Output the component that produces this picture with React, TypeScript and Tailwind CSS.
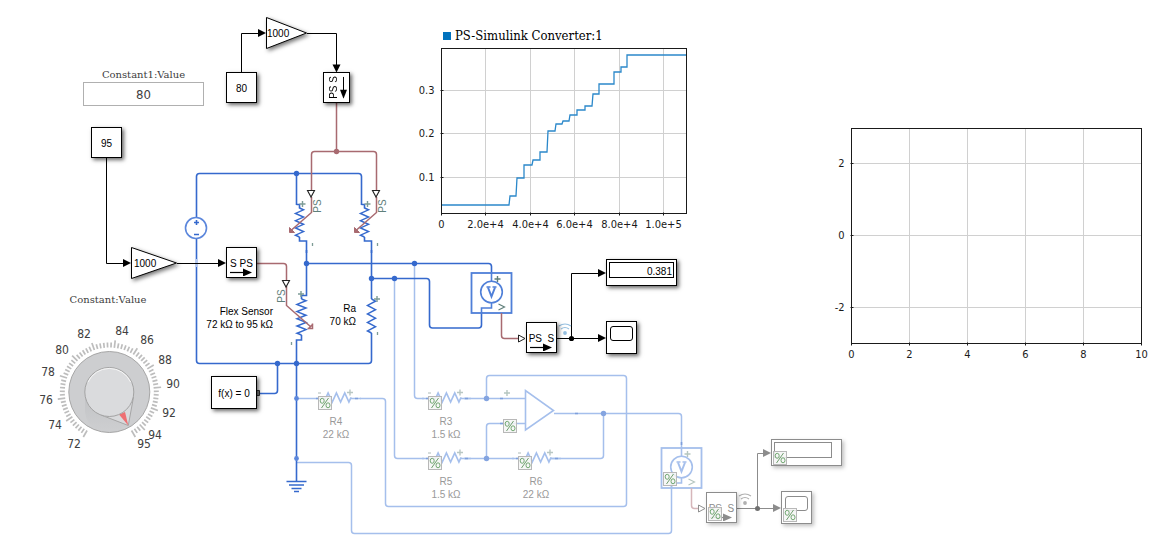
import { useState } from "react";
import type { ReactNode } from "react";

const BLUE = "#3569cd";
const PALE = "#a5bfec";
const RED = "#a86a70";

/* ---------- geometry helpers ---------- */

function zigzagV(x: number, y0: number, y1: number, teeth: number, amp: number) {
  const step = (y1 - y0) / (teeth * 2);
  let d = `M${x} ${y0}`;
  for (let i = 0; i < teeth * 2; i++) {
    const side = i % 2 === 0 ? amp : -amp;
    d += ` L${x + side} ${y0 + step * (i + 0.5)}`;
  }
  return d + ` L${x} ${y1}`;
}

function zigzagH(x0: number, x1: number, y: number, teeth: number, amp: number) {
  const step = (x1 - x0) / (teeth * 2);
  let d = `M${x0} ${y}`;
  for (let i = 0; i < teeth * 2; i++) {
    const side = i % 2 === 0 ? -amp : amp;
    d += ` L${x0 + step * (i + 0.5)} ${y + side}`;
  }
  return d + ` L${x1} ${y}`;
}

/* ---------- schematic symbols ---------- */

function Dot({ x, y, color = BLUE, r = 2.7 }: { x: number; y: number; color?: string; r?: number }) {
  return <circle cx={x} cy={y} r={r} fill={color} />;
}

function ArrowRight({ x, y, color = "#000" }: { x: number; y: number; color?: string }) {
  return <path d={`M${x} ${y} l-8 -4 v8 z`} fill={color} />;
}

function Plus({ x, y, color = "#7d9c96" }: { x: number; y: number; color?: string }) {
  return <path d={`M${x - 3} ${y} h6 M${x} ${y - 3} v6`} stroke={color} strokeWidth="1.4" fill="none" />;
}

function Voltmeter({ x, y, color, mark }: { x: number; y: number; color: string; mark: string }) {
  return (
    <g fill="none" stroke={color}>
      <rect x={x - 20} y={y - 19} width="40" height="40" strokeWidth="1.8" />
      <circle cx={x} cy={y} r="10.8" strokeWidth="1.6" fill="#fff" />
      <path d={`M${x} ${y - 20} V${y - 11} M${x} ${y + 11} v5 h-10 v5`} strokeWidth="1.6" />
      <path d={`M${x - 3.5} ${y - 4.5} l3.5 9 l3.5 -9`} strokeWidth="2" />
      <path d={`M${x - 5} ${y - 5} h4 M${x + 1} ${y - 5} h4`} strokeWidth="1.3" />
      <path d={`M${x + 3} ${y - 13} h6 M${x + 6} ${y - 16} v6`} stroke={mark} strokeWidth="1.4" />
      <path d={`M${x + 7} ${y + 12} l6 3 l-6 3`} stroke={mark} strokeWidth="1.2" />
    </g>
  );
}

function Wifi({ x, y, color }: { x: number; y: number; color: string }) {
  return (
    <g fill="none" stroke={color} strokeWidth="1.1">
      <circle cx={x} cy={y + 3} r="1.9" fill={color} stroke="none" />
      <path d={`M${x - 4} ${y - 1} q4 -3 8 0 M${x - 6} ${y - 4} q6 -4 12 0`} />
    </g>
  );
}

function FadedResistor({ x, y }: { x: number; y: number }) {
  return (
    <g fill="none">
      <path d={`M${x - 26} ${y} h14 M${x + 13} ${y - 1} v1 h10`} stroke={PALE} strokeWidth="1.4" />
      <path d={zigzagH(x - 12, x + 13, y - 1, 3, 4.5)} stroke={PALE} strokeWidth="1.7" />
      <path d={`M${x - 22} ${y} h2 M${x + 17} ${y} h3`} stroke="#7e9fdc" strokeWidth="1.6" />
      <path d={`M${x - 20} ${y - 5.5} h3`} stroke="#aebcb8" strokeWidth="1" />
      <Plus x={x + 12} y={y - 6} color="#b9c7c3" />
    </g>
  );
}

function PsLabel({ x, y }: { x: number; y: number }) {
  return (
    <text
      transform={`translate(${x} ${y}) rotate(-90)`}
      textAnchor="middle"
      fill="#5f807b"
      className="font-['Liberation_Sans',Arial,sans-serif] text-[10px]"
    >
      PS
    </text>
  );
}

function VariableResistor({ x }: { x: number }) {
  return (
    <g fill="none">
      <path d={`M${x} 204.5 h3 v4`} stroke={BLUE} strokeWidth="1.6" />
      <path d={zigzagV(x + 3, 208, 237, 4, 4)} stroke={BLUE} strokeWidth="1.5" />
      <path d={`M${x + 3} 237 v4 h7 v12`} stroke={BLUE} strokeWidth="1.6" />
      <Plus x={x + 6} y={204} />
      <path d={`M${x + 16} 243 v3`} stroke="#7d9c96" strokeWidth="1.3" />
      <path d={`M${x + 15} 197 V212.5 L${x - 5} 230`} stroke={RED} strokeWidth="1.5" />
      <path d={`M${x - 7} 232.500 v-5 l5 5 z`} fill={RED} stroke={RED} />
      <path d={`M${x + 11} 190.500 h7 l-3.500 6.500 z`} fill="#fff" stroke="#222" strokeWidth="1.1" />
      <PsLabel x={x + 24} y={206} />
    </g>
  );
}

function Wiring() {
  return (
    <svg
      aria-hidden="true"
      className="pointer-events-none absolute left-0 top-0 overflow-visible"
      width="860"
      height="552"
      viewBox="0 0 860 552"
      fill="none"
    >
      {/* inactive variant wiring */}
      <g stroke={PALE} strokeWidth="1.5">
        <path d="M296.500 398.500 H312 M360 398.500 H382.500 q3 0 3 3 V503.500 q0 3 3 3 H623.500 q3 0 3 -3 V378.500 q0 -3 -3 -3 H489.500 q-3 0 -3 3 V398.500" />
        <path d="M296.500 462.500 H348.500 q3 0 3 3 V530.500 q0 3 3 3 H668.500 q3 0 3 -3 V486" />
        <path d="M414.500 263.500 V395.500 q0 3 3 3 H424 M464 398.500 H526" />
        <path d="M394.500 278.500 V455.500 q0 3 3 3 H424 M464 458.500 H514 M550 458.500 H600.500 q3 0 3 -3 V413.500" />
        <path d="M486.500 458.500 V426.500 q0 -3 3 -3 H526" />
        <path d="M554 413.500 H678.500 q3 0 3 3 V448" />
        <path d="M525.500 390.500 V430 L553.500 410.500 Z" fill="#fff" strokeWidth="1.6" />
      </g>
      <path d="M500 398.500 h3 M500 423.500 h3 M575 413.500 h3 M681.500 442 v3" stroke="#7e9fdc" strokeWidth="1.6" />
      <Plus x={507} y={393} color="#b5c6c0" />
      <FadedResistor x={338} y={398.5} />
      <FadedResistor x={448} y={398.5} />
      <FadedResistor x={448} y={458.5} />
      <FadedResistor x={538} y={458.5} />
      <Dot x={486.5} y={398.5} color="#84a4e0" />
      <Dot x={486.5} y={458.5} color="#84a4e0" />
      <Dot x={603.5} y={413.5} color="#84a4e0" />
      <Voltmeter x={681.5} y={467} color={PALE} mark="#b5c6c0" />
      <path d="M691.500 488 V505.500 q0 3 3 3 H698" stroke="#d6b6ba" strokeWidth="1.5" />
      <path d="M698.500 505 v7 l6.500 -3.500 z" fill="#fff" stroke="#909090" />
      <path d="M737 508.500 H775 M757.500 508.500 V453.500 H765" stroke="#8c8c8c" />
      <Dot x={757.5} y={508.5} color="#707070" r={2.5} />
      <ArrowRight x={771} y={453} color="#8c8c8c" />
      <ArrowRight x={781} y={508} color="#8c8c8c" />
      <Wifi x={745} y={500} color="#b0b0b0" />

      {/* electrical network */}
      <g stroke={BLUE} strokeWidth="1.6">
        <path d="M196.500 217 V176.500 q0 -3 3 -3 H358.500 q3 0 3 3 V205" />
        <path d="M296.500 173.500 V205" />
        <path d="M196.500 239 V360.500 q0 3 3 3 H368.500 q3 0 3 -3 V333" />
        <path d="M306.500 250 V295.500 H301.500 V299" />
        <path d={zigzagV(301.5, 299, 335, 5, 4.5)} strokeWidth="1.5" />
        <path d="M301.500 335 V340 H296.500 V481" />
        <path d="M371.500 250 V299" />
        <path d={zigzagV(371.5, 299, 333, 4, 4)} strokeWidth="1.5" />
        <path d="M306.500 263.500 H488.500 q3 0 3 3 V274" />
        <path d="M371.500 278.500 H426.500 q3 0 3 3 V325 q0 3 3 3 H478.500 q3 0 3 -3 V312" />
        <path d="M259 393.500 H274.500 q3 0 3 -3 V363.500" />
        <path d="M286.500 481.500 h20 M289 485 h15 M291.500 488.500 h10 M294 491.500 h5" strokeWidth="1.5" />
        <circle cx="196" cy="228" r="10.5" fill="#fff" stroke="#5c87dc" />
        <path d="M194 222.500 h5 M196.500 220 v5 M194 234.500 h5" />
      </g>
      <path d="M256.500 390.500 h3 v5 h-3 z" fill="#888" stroke="#333" />
      <path d="M196.500 259 v8" stroke="#b5c9f2" strokeWidth="2" />
      <VariableResistor x={296.5} />
      <VariableResistor x={361.5} />
      <Plus x={301} y={294} />
      <Plus x={377} y={299} />
      <path d="M377.500 332 v3 M291.500 342 v3" stroke="#7d9c96" strokeWidth="1.3" />
      <Dot x={296.5} y={173.5} />
      <Dot x={306.5} y={263.5} />
      <Dot x={371.5} y={278.5} />
      <Dot x={394.5} y={278.5} />
      <Dot x={414.5} y={263.5} />
      <Dot x={277.5} y={363.5} />
      <Dot x={296.5} y={363.5} />
      <Dot x={296.5} y={398.5} color="#5c87dc" r={2.4} />
      <Dot x={296.5} y={458.5} color="#5c87dc" r={2.4} />
      <Voltmeter x={491.5} y={292} color="#4f7fd8" mark="#5f7f7a" />

      {/* physical signals */}
      <g stroke={RED} strokeWidth="1.5">
        <path d="M336.500 103 V151.500 M311.500 190 V154.500 q0 -3 3 -3 H373.500 q3 0 3 3 V190" />
        <path d="M257 263.500 H283.500 q3 0 3 3 V281 M286.500 286 V305.500 L311 327" />
        <path d="M307.500 328.500 h5 v-5 M308 329 l5 -5" />
        <path d="M501.500 313 V335.500 q0 3 3 3 H519" />
      </g>
      <Dot x={336.5} y={151.5} color={RED} />
      <path d="M282.500 280.500 h7 l-3.500 6.500 z" fill="#fff" stroke="#222" strokeWidth="1.1" />
      <path d="M518.500 335 v7 l6.500 -3.500 z" fill="#fff" stroke="#222" />
      <PsLabel x={285} y={296} />

      {/* signal lines */}
      <g stroke="#000">
        <path d="M241.500 73 V33.500 H260 M307 33.500 H336.500 V66" />
        <path d="M106.500 158 V263.500 H125 M177 263.500 H220" />
        <path d="M557 338.500 H600 M571.500 338.500 V273.500 H600" />
      </g>
      <ArrowRight x={266} y={33} />
      <ArrowRight x={131} y={263} />
      <ArrowRight x={226} y={263} />
      <ArrowRight x={606} y={338} />
      <ArrowRight x={606} y={273} />
      <path d="M336.500 72.500 l-4 -8 h8 z" fill="#000" />
      <Dot x={571.5} y={338.5} color="#000" r={2.6} />
      <Wifi x={565} y={330} color="#94bfe0" />
    </svg>
  );
}

/* ---------- blocks ---------- */

const face = "font-['Liberation_Sans',Arial,sans-serif] text-[10px] leading-[13px]";

function Block({
  place,
  align = "items-center",
  faded = false,
  children,
}: {
  place: string;
  align?: string;
  faded?: boolean;
  children?: ReactNode;
}) {
  return (
    <div
      className={`absolute flex justify-center border bg-white ${align} ${face} ${
        faded
          ? "border-[#8c8c8c] text-[#8c8c8c] shadow-[2px_2px_4px_rgba(0,0,0,0.25)]"
          : "border-black text-black shadow-[2px_2px_4px_rgba(0,0,0,0.6)]"
      } ${place}`}
    >
      {children}
    </div>
  );
}

function Gain({ place, width, value, pad }: { place: string; width: number; value: string; pad: string }) {
  return (
    <div className={`absolute flex items-center ${face} ${place}`}>
      <svg
        aria-hidden="true"
        width={width}
        height="32"
        className="absolute left-0 top-0 overflow-visible drop-shadow-[2px_2px_2px_rgba(0,0,0,0.55)]"
      >
        <path d={`M0.500 0.500 V31.500 L${width - 0.5} 16 Z`} fill="#fff" stroke="#000" />
      </svg>
      <span className={`relative ${pad}`}>{value}</span>
    </div>
  );
}

function Converter({ label, faded = false }: { label: string; faded?: boolean }) {
  const color = faded ? "#8c8c8c" : "#000";
  return (
    <div className="flex flex-col items-center pb-px">
      <span className="whitespace-pre leading-[9px]">{label}</span>
      <svg aria-hidden="true" width="22" height="8">
        <path d="M0 4.500 H16" stroke={color} strokeWidth="1.2" />
        <path d="M22 4.500 l-9 -4 v8 z" fill={color} />
      </svg>
    </div>
  );
}

function VariantBadge({ place }: { place: string }) {
  return (
    <svg aria-hidden="true" className={`absolute ${place}`} width="14" height="14" fill="none">
      <rect x="0.500" y="0.500" width="13" height="13" fill="#f4f4f4" fillOpacity="0.85" stroke="#b8b8b8" />
      <path d="M10.500 2 L3.500 12" stroke="#6f9f6f" strokeWidth="1" />
      <ellipse cx="4.200" cy="4.800" rx="2" ry="2.500" stroke="#72a872" />
      <ellipse cx="10" cy="9.300" rx="2" ry="2.500" stroke="#72a872" />
    </svg>
  );
}

function PartLabel({ place, tone, name, value }: { place: string; tone: string; name: string; value: string }) {
  return (
    <div className={`absolute whitespace-nowrap ${face} ${tone} ${place}`}>
      <div>{name}</div>
      <div>{value}</div>
    </div>
  );
}

/* ---------- dashboard controls ---------- */

function ValueField() {
  const [value, setValue] = useState("80");
  return (
    <div className="absolute left-[83px] top-[67px] flex w-[121px] flex-col items-center">
      <label htmlFor="constant1" className="font-['DejaVu_Serif',serif] text-[10px] leading-[15px] text-[#404040]">
        Constant1:Value
      </label>
      <input
        id="constant1"
        value={value}
        onChange={(e) => setValue(e.target.value)}
        className="h-6 w-full border border-[#b0b0b0] bg-white text-center font-['DejaVu_Sans_Condensed','DejaVu_Sans',sans-serif] text-[13px] text-[#404040] outline-none"
      />
    </div>
  );
}

const dialNumbers: [number, number, number][] = [
  [72, 74, 444],
  [74, 55, 425],
  [76, 46, 400],
  [78, 48, 372],
  [80, 62, 350],
  [82, 84, 334],
  [84, 122, 331],
  [86, 147, 340],
  [88, 165, 360],
  [90, 173, 384],
  [92, 169, 413],
  [94, 155, 435],
  [95, 144, 444],
];

function Knob() {
  const [value, setValue] = useState(95);
  const cx = 109.3;
  const cy = 392;
  const ticks = Array.from({ length: 70 }, (_, i) => i);
  return (
    <div className="absolute left-[30px] top-[292px] w-[156px]">
      <label
        htmlFor="constant"
        className="block text-center font-['DejaVu_Serif',serif] text-[10px] leading-[15px] text-[#404040]"
      >
        Constant:Value
      </label>
      <div className="relative">
        <svg width="156" height="144" viewBox="30 307 156 144" className="block" fill="none">
          <defs>
            <linearGradient id="trail" x1="0" y1="0" x2="0" y2="1">
              <stop offset="0" stopColor="#b4b6b9" />
              <stop offset="1" stopColor="#cdced0" />
            </linearGradient>
          </defs>
          {ticks.map((i) => {
            const angle = ((-150 + (i * 300) / 69) * Math.PI) / 180;
            const outer = i % 6 === 0 || i === 69 ? 52 : 49.5;
            return (
              <line
                key={i}
                x1={cx + 44.5 * Math.sin(angle)}
                y1={cy - 44.5 * Math.cos(angle)}
                x2={cx + outer * Math.sin(angle)}
                y2={cy - outer * Math.cos(angle)}
                stroke="#bdbdbd"
                strokeWidth="1.700"
              />
            );
          })}
          <circle cx={cx} cy={cy} r="40.500" fill="#cdced0" stroke="#a6a6a6" />
          <path d="M85 392 V412 Q86 424 98 430 H118 L128 425 L109 416 Z" fill="url(#trail)" opacity="0.5" />
          <g transform={`rotate(${((value - 95) * 300) / 23} ${cx} ${cy})`}>
            <path d="M101 415 L128.300 425.500 L133.500 397 Z" fill="#d9dadc" stroke="#a6a6a6" />
            <path d="M119 414.500 L125 412 L128.300 425.500 Z" fill="#ee6f72" />
          </g>
          <circle cx={cx} cy={cy} r="24.500" fill="#dadbdd" stroke="#a3a3a3" />
          <path d="M88 382 A23.500 23.500 0 0 1 130.600 382" stroke="#f7f7f7" />
          {dialNumbers.map(([n, x, y]) => (
            <text
              key={n}
              x={x}
              y={y + 4}
              textAnchor="middle"
              fill="#404040"
              className="font-['DejaVu_Sans_Condensed','DejaVu_Sans',sans-serif] text-[12px]"
            >
              {n}
            </text>
          ))}
        </svg>
        <input
          id="constant"
          type="range"
          min={72}
          max={95}
          value={value}
          onChange={(e) => setValue(Number(e.target.value))}
          className="absolute inset-x-10 inset-y-11 cursor-pointer opacity-0"
        />
      </div>
    </div>
  );
}

/* ---------- charts ---------- */

type Tick = [number, string];
const tickText = "font-['DejaVu_Sans_Condensed','DejaVu_Sans',sans-serif] text-[11px]";

function Plot({
  left,
  right,
  top,
  bottom,
  xTicks,
  yTicks,
  line,
}: {
  left: number;
  right: number;
  top: number;
  bottom: number;
  xTicks: Tick[];
  yTicks: Tick[];
  line?: string;
}) {
  const width = right - left + 42;
  const height = bottom - top + 26;
  return (
    <svg
      width={width}
      height={height}
      viewBox={`${left - 31.5} ${top - 4.5} ${width} ${height}`}
      fill="none"
      className="block overflow-visible"
    >
      {xTicks.map(([x]) => (
        <path key={x} d={`M${x} ${top} V${bottom}`} stroke="#d0d0d0" />
      ))}
      {yTicks.map(([y]) => (
        <path key={y} d={`M${left} ${y} H${right}`} stroke="#d0d0d0" />
      ))}
      <rect x={left} y={top} width={right - left} height={bottom - top} stroke="#1a1a1a" />
      {xTicks.map(([x, label]) => (
        <g key={x}>
          <path d={`M${x} ${bottom - 1} v3`} stroke="#1a1a1a" />
          <text x={x} y={bottom + 14.5} textAnchor="middle" fill="#1a1a1a" className={tickText}>
            {label}
          </text>
        </g>
      ))}
      {yTicks.map(([y, label]) => (
        <g key={y}>
          <path d={`M${left - 1} ${y} h3`} stroke="#1a1a1a" />
          <text x={left - 7} y={y + 3.5} textAnchor="end" fill="#1a1a1a" className={tickText}>
            {label}
          </text>
        </g>
      ))}
      {line && <polyline points={line} stroke="#2b88ca" strokeWidth="1.300" />}
    </svg>
  );
}

const signal =
  "442,205 509,205 510,196 516,196 517,178 524,178 524,165 532,165 533,160 540,160 540,152 547,152 548,131 555,131 556,124 562,124 563,121 569,121 570,115 577,115 577,110 585,110 585,106 592,106 593,94 599,94 599,84 614,84 614,72 621,72 621,67 627,67 627,55 686,55";

export default function App() {
  return (
    <main className="relative min-h-screen w-full overflow-x-auto bg-white">
      <Wiring />

      <ValueField />
      <Knob />

      <Block place="left-[226px] top-[72px] size-[31px] pt-0.5">80</Block>
      <Block place="left-[91px] top-[127px] size-[31px] pt-0.5">95</Block>
      <Gain place="left-[266px] top-[17px] h-8 w-[41px]" width={41} value="1000" pad="pl-px" />
      <Gain place="left-[131px] top-[247px] h-8 w-[46px]" width={46} value="1000" pad="pl-[3px]" />
      <Block place="left-[323px] top-[72px] h-[31px] w-[27px]">
        <div className="flex rotate-180 flex-row-reverse items-center">
          <span className="whitespace-pre [writing-mode:vertical-rl]">PS S</span>
          <svg aria-hidden="true" width="7" height="22" className="order-1">
            <path d="M3.500 22 V6" stroke="#000" />
            <path d="M3.500 0 l-3.500 9 h7 z" fill="#000" />
          </svg>
        </div>
      </Block>
      <Block align="items-end" place="left-[226px] top-[247px] size-[31px]">
        <Converter label="S PS" />
      </Block>
      <Block place="left-[211px] top-[376px] h-[33px] w-[46px] pt-0.5">f(x) = 0</Block>
      <Block align="items-end" place="left-[526px] top-[322px] size-[31px]">
        <Converter label="PS  S" />
      </Block>
      <Block align="items-start" place="left-[606px] top-[259px] h-[27px] w-[71px] pt-0.5">
        <output className="flex h-4 w-[65px] items-center justify-end border border-black pr-px pt-0.5">0.381</output>
      </Block>
      <Block align="items-start" place="left-[606px] top-[321px] h-[33px] w-[31px] pt-1">
        <div className="h-[15px] w-[23px] rounded-[3px] border border-black" />
      </Block>

      <Block faded align="items-end" place="left-[706px] top-[492px] size-[31px]">
        <Converter faded label="PS  S" />
      </Block>
      <Block faded align="items-start" place="left-[771px] top-[439px] h-[27px] w-[71px] pt-0.5">
        <div className="mr-[7px] h-4 w-[58px] border border-[#8c8c8c]" />
      </Block>
      <Block faded align="items-start" place="left-[781px] top-[491px] h-[33px] w-[31px] pt-1">
        <div className="h-[15px] w-[23px] rounded-[3px] border border-[#8c8c8c]" />
      </Block>

      <VariantBadge place="left-[318px] top-[396px]" />
      <VariantBadge place="left-[428px] top-[396px]" />
      <VariantBadge place="left-[428px] top-[456px]" />
      <VariantBadge place="left-[518px] top-[456px]" />
      <VariantBadge place="left-[503px] top-[419px]" />
      <VariantBadge place="left-[663px] top-[472px]" />
      <VariantBadge place="left-[708px] top-[507px]" />
      <VariantBadge place="left-[773px] top-[451px]" />
      <VariantBadge place="left-[783px] top-[508px]" />

      <PartLabel place="left-[193px] top-[305px] w-20 text-right" tone="text-black" name="Flex Sensor" value="72 kΩ to 95 kΩ" />
      <PartLabel place="left-[316px] top-[302px] w-10 text-right" tone="text-black" name="Ra" value="70 kΩ" />
      <PartLabel place="left-[316px] top-[415px] w-10 text-center" tone="text-[#999]" name="R4" value="22 kΩ" />
      <PartLabel place="left-[426px] top-[415px] w-10 text-center" tone="text-[#999]" name="R3" value="1.5 kΩ" />
      <PartLabel place="left-[426px] top-[475px] w-10 text-center" tone="text-[#999]" name="R5" value="1.5 kΩ" />
      <PartLabel place="left-[516px] top-[475px] w-10 text-center" tone="text-[#999]" name="R6" value="22 kΩ" />

      <figure className="absolute left-[410px] top-[28px]">
        <figcaption className="flex h-4 items-center gap-1 pl-[33px] font-['DejaVu_Serif_Condensed','DejaVu_Serif',serif] text-[13px] text-black">
          <span className="size-2 bg-[#0072bd]" />
          PS-Simulink Converter:1
        </figcaption>
        <Plot
          left={441.5}
          right={686.5}
          top={48.5}
          bottom={213.5}
          xTicks={[
            [441.5, "0"],
            [485.5, "2.0e+4"],
            [530.5, "4.0e+4"],
            [574.5, "6.0e+4"],
            [619.5, "8.0e+4"],
            [663.5, "1.0e+5"],
          ]}
          yTicks={[
            [90.5, "0.3"],
            [133.5, "0.2"],
            [177.5, "0.1"],
          ]}
          line={signal}
        />
      </figure>

      <figure className="absolute left-[820px] top-[124px]">
        <Plot
          left={851.5}
          right={1141.5}
          top={128.5}
          bottom={343.5}
          xTicks={[
            [851.5, "0"],
            [909.5, "2"],
            [967.5, "4"],
            [1025.5, "6"],
            [1083.5, "8"],
            [1141.5, "10"],
          ]}
          yTicks={[
            [163.5, "2"],
            [235.5, "0"],
            [307.5, "-2"],
          ]}
        />
      </figure>
    </main>
  );
}
